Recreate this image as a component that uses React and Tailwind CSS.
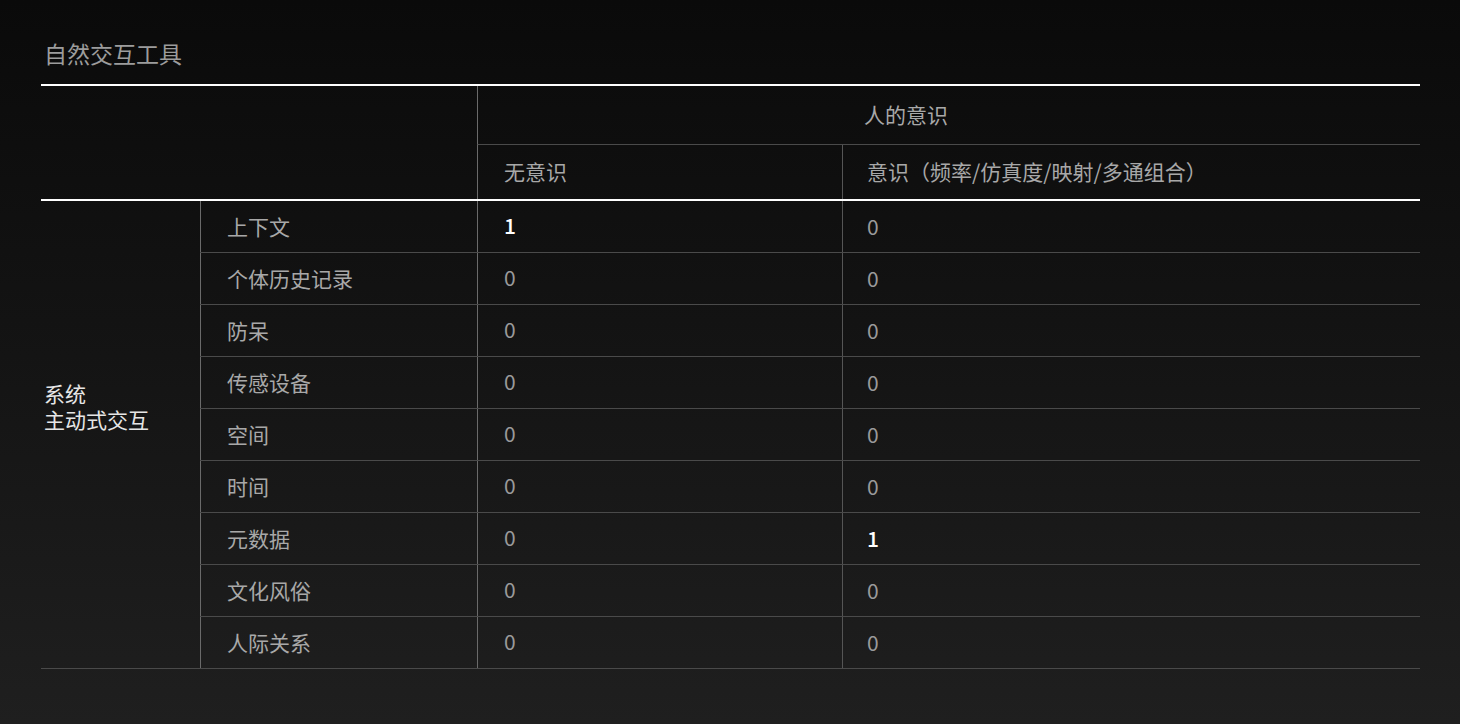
import React from 'react';

const rows = [
  ['上下文', 1, 0],
  ['个体历史记录', 0, 0],
  ['防呆', 0, 0],
  ['传感设备', 0, 0],
  ['空间', 0, 0],
  ['时间', 0, 0],
  ['元数据', 0, 1],
  ['文化风俗', 0, 0],
  ['人际关系', 0, 0],
];

const Val = ({ v }) => (
  <span className={v ? 'text-white font-medium' : 'text-[#9a9a9a]'}>{v}</span>
);

export default function App() {
  return (
    <div
      className="w-[1460px] h-[724px] bg-gradient-to-b from-[#0a0a0a] to-[#1f1f1f] px-[41px] pt-[38px] text-[21px] text-[#a8a8a8]"
      style={{ fontFamily: '"Noto Sans CJK SC", "Noto Sans", sans-serif' }}
    >
      {/* Title */}
      <div className="pl-[3px] text-[23px] leading-[30px] text-[#9c9c9c] mb-[16px]">自然交互工具</div>

      {/* Header */}
      <div className="w-[1379px] border-t-2 border-b-2 border-white grid grid-cols-[436px_365px_1fr]">
        <div className="row-span-2" />
        <div className="col-span-2 h-[59px] border-l border-b border-l-[#6a6a6a] border-b-[#4a4a4a] flex items-center pl-[386px]">
          人的意识
        </div>
        <div className="h-[54px] border-l border-[#6a6a6a] flex items-center pl-[26px]">无意识</div>
        <div className="h-[54px] border-l border-[#555] flex items-center pl-[24px]">
          意识（频率/仿真度/映射/多通组合）
        </div>
      </div>

      {/* Body */}
      <div className="w-[1379px] grid grid-cols-[159px_1fr] border-b border-[#4a4a4a]">
        <div className="flex flex-col justify-center gap-[2px] pb-[58px] pl-[3px] text-[#e6e6e6]">
          <span className="leading-[24px]">系统</span>
          <span className="leading-[24px]">主动式交互</span>
        </div>
        <div className="flex flex-col">
          {rows.map(([label, a, b], i) => (
            <div
              key={label}
              className={`grid grid-cols-[277px_365px_1fr] ${i < rows.length - 1 ? 'h-[52px] border-b border-[#4a4a4a]' : 'h-[51px]'}`}
            >
              <div className="border-l border-[#6a6a6a] flex items-center pl-[26px]">{label}</div>
              <div className="border-l border-[#6a6a6a] flex items-center pl-[26px] pb-[2px]">
                <Val v={a} />
              </div>
              <div className="border-l border-[#555] flex items-center pl-[24px]">
                <Val v={b} />
              </div>
            </div>
          ))}
        </div>
      </div>
    </div>
  );
}
